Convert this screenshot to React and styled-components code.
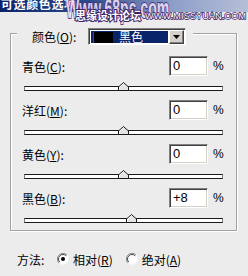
import styled, { createGlobalStyle } from "styled-components"

const fields = [
    { label: "青色", key: "C", value: "0", amount: 0 },
    { label: "洋红", key: "M", value: "0", amount: 0 },
    { label: "黄色", key: "Y", value: "0", amount: 0 },
    { label: "黑色", key: "B", value: "+8", amount: 8 },
]

const TRACK_WIDTH = 199

const App = () => {
    return <>
        <GlobalStyle/>
        <Dialog>
            <TitleBar>
                <TitleText>可选颜色选项</TitleText>
            </TitleBar>

            {/* 颜色 그룹 */}
            <GroupBox>
                <Header>
                    <HeaderLabel>颜色(<u>O</u>):</HeaderLabel>
                    <Dropdown>
                        <Selection>
                            <Swatch/>
                            <SelectionText>黑色</SelectionText>
                        </Selection>
                        <ArrowButton>
                            <svg width="7" height="4" viewBox="0 0 7 4">
                                <path d="M0 0h7L3.5 4z" fill="#000"/>
                            </svg>
                        </ArrowButton>
                    </Dropdown>
                </Header>

                <Fields>
                    {fields.map(f => {
                        // -100 ~ +100 -> 트랙 위치
                        const pos = (f.amount + 100) / 200 * (TRACK_WIDTH - 1)
                        return <Field key={f.key}>
                            <InputRow>
                                <FieldLabel>{f.label}(<u>{f.key}</u>):</FieldLabel>
                                <ValueBox>{f.value}</ValueBox>
                                <Percent>%</Percent>
                            </InputRow>
                            <Slider>
                                <Track/>
                                <Thumb style={{ left: pos - 5 }} width="11" height="9" viewBox="0 0 11 9">
                                    <path d="M5.5 0.5L10.5 5V8.5H0.5V5Z" fill="#e4e4e4" stroke="#1a1a1a"/>
                                    <path d="M5.5 1.8L1.5 5.3V7.5" fill="none" stroke="#fff"/>
                                </Thumb>
                            </Slider>
                        </Field>
                    })}
                </Fields>
            </GroupBox>

            {/* 방법 */}
            <MethodRow>
                <MethodLabel>方法:</MethodLabel>
                <Radio checked/>
                <RadioText>相对(<u>R</u>)</RadioText>
                <Radio $gap/>
                <RadioText>绝对(<u>A</u>)</RadioText>
            </MethodRow>

            {/* 워터마크 */}
            <Watermark>
                <BigMark>Www.68ps.com</BigMark>
                <CnMark>思缘设计论坛</CnMark>
                <UrlMark>WWW.MISSYUAN.COM</UrlMark>
            </Watermark>
        </Dialog>
    </>
}

const Radio = ({ checked, $gap }) => (
    <RadioIcon $gap={$gap} width="12" height="12" viewBox="0 0 12 12">
        <circle cx="6" cy="6" r="5.5" fill="#fff"/>
        <path d="M10 2A5.5 5.5 0 0 0 2 10" fill="none" stroke="#8a8a8a"/>
        <path d="M9.2 2.8A4.5 4.5 0 0 0 2.8 9.2" fill="none" stroke="#444"/>
        <path d="M2 10A5.5 5.5 0 0 0 10 2" fill="none" stroke="#f4f4f4"/>
        {checked && <circle cx="6" cy="6" r="2" fill="#000"/>}
    </RadioIcon>
)

export default App


//-----------------------------------------------
// 기본 :

const GlobalStyle = createGlobalStyle`
    html, body {
        margin: 0;
        padding: 0;
        background: #ececec;
    }
    body {
        font-family: "Noto Sans CJK SC", "Noto Sans", sans-serif;
        font-size: 12px;
        color: #000;
    }
    u {
        text-decoration-thickness: 1px;
        text-underline-offset: 1px;
    }
`
const Dialog = styled.div`
    position: relative;
    width: 248px;
    height: 276px;
    overflow: hidden;
    background: #ececec;
`
const TitleBar = styled.div`
    height: 12px;
    overflow: hidden;
    background: linear-gradient(90deg, #0a246a 0%, #2b4a8c 35%, #8d9fc8 70%, #b6bfd8 100%);
`
const TitleText = styled.div`
    margin-top: -4px;
    padding-left: 1px;
    color: #fff;
    font-weight: bold;
    font-size: 12px;
    line-height: 16px;
    letter-spacing: 0.6px;
`

//-----------------------------------------------
// 그룹 박스 :

const GroupBox = styled.div`
    box-sizing: border-box;
    width: 227px;
    height: 198px;
    margin: 21px 0 0 10px;
    padding-left: 11px;
    border: 1px solid #a3a3a3;
    box-shadow: inset 1px 1px 0 #fff, 1px 1px 0 #fff;
`
const Header = styled.div`
    box-sizing: border-box;
    display: flex;
    align-items: center;
    width: 176px;
    height: 17px;
    margin: -6px 0 0 -5px;
    padding-left: 15px;
    background: #ececec;
`
const HeaderLabel = styled.span`
    width: 56px;
    line-height: 17px;
`
const Dropdown = styled.div`
    box-sizing: border-box;
    display: flex;
    width: 98px;
    height: 17px;
    border: 1px solid;
    border-color: #808080 #fff #fff #808080;
    box-shadow: inset 1px 1px 0 #404040;
    padding: 1px 1px 0 1px;
    background: #fff;
`
const Selection = styled.div`
    flex: 1;
    display: flex;
    align-items: center;
    margin: 1px 1px 1px 1px;
    background: #0a246a;
`
const Swatch = styled.div`
    width: 19px;
    height: 11px;
    margin-left: 2px;
    background: #000;
    border-left: 1px solid #2a4fa0;
`
const SelectionText = styled.span`
    margin-left: 6px;
    color: #fff;
    line-height: 12px;
`
const ArrowButton = styled.div`
    box-sizing: border-box;
    display: flex;
    align-items: center;
    justify-content: center;
    width: 15px;
    height: 14px;
    background: #d4d0c8;
    border: 1px solid;
    border-color: #fff #404040 #404040 #fff;
    box-shadow: inset -1px -1px 0 #808080;
`

//-----------------------------------------------
// 입력 + 슬라이더 :

const Fields = styled.div`
    display: flex;
    flex-direction: column;
    gap: 4px;
    padding-top: 11px;
`
const Field = styled.div`
    display: flex;
    flex-direction: column;
    gap: 6px;
`
const InputRow = styled.div`
    display: flex;
    align-items: center;
    height: 20px;
`
const FieldLabel = styled.span`
    width: 147px;
`
const ValueBox = styled.div`
    box-sizing: border-box;
    width: 39px;
    height: 20px;
    padding: 1px 0 0 3px;
    border: 1px solid;
    border-color: #808080 #fff #fff #808080;
    box-shadow: inset 1px 1px 0 #404040, inset -1px -1px 0 #d4d0c8;
    background: #fff;
    font-family: "Liberation Sans", sans-serif;
    font-size: 13px;
    line-height: 16px;
`
const Percent = styled.span`
    margin-left: 5px;
    font-family: "Liberation Sans", sans-serif;
    font-size: 12px;
`
const Slider = styled.div`
    position: relative;
    width: ${TRACK_WIDTH}px;
    height: 14px;
    margin-left: 2px;
`
const Track = styled.div`
    box-sizing: border-box;
    width: 100%;
    height: 5px;
    margin-top: 4px;
    border: 1px solid;
    border-color: #1a1a1a #7a7a7a #1a1a1a #7a7a7a;
    background: #fff;
`
const Thumb = styled.svg`
    position: absolute;
    top: 0;
    display: block;
`

//-----------------------------------------------
// 방법 :

const MethodRow = styled.div`
    display: flex;
    align-items: center;
    height: 14px;
    margin-top: 21px;
    padding-left: 17px;
`
const MethodLabel = styled.span`
    width: 40px;
`
const RadioIcon = styled.svg`
    display: block;
    margin: 0 4px 0 ${p => p.$gap ? 13 : 0}px;
`
const RadioText = styled.span``

//-----------------------------------------------
// 워터마크 :

const Watermark = styled.div`
    position: absolute;
    inset: 0;
    pointer-events: none;
`
const BigMark = styled.div`
    position: absolute;
    left: 66px;
    top: -5px;
    font-family: "Liberation Sans", sans-serif;
    font-weight: bold;
    font-size: 27px;
    line-height: 28px;
    color: #e6dcf2;
    -webkit-text-stroke: 2px #4a2a7a;
    paint-order: stroke fill;
    transform: scaleX(0.52);
    transform-origin: left top;
    opacity: 0.9;
`
const CnMark = styled.div`
    position: absolute;
    left: 75px;
    top: 9px;
    font-size: 11px;
    font-weight: bold;
    line-height: 13px;
    color: #fff;
    -webkit-text-stroke: 2px #3e2266;
    paint-order: stroke fill;
`
const UrlMark = styled.div`
    position: absolute;
    left: 145px;
    top: 11px;
    font-family: "Liberation Sans", sans-serif;
    font-size: 9px;
    line-height: 10px;
    color: #fff;
    -webkit-text-stroke: 1.5px #3e2266;
    paint-order: stroke fill;
    letter-spacing: 0.2px;
`
